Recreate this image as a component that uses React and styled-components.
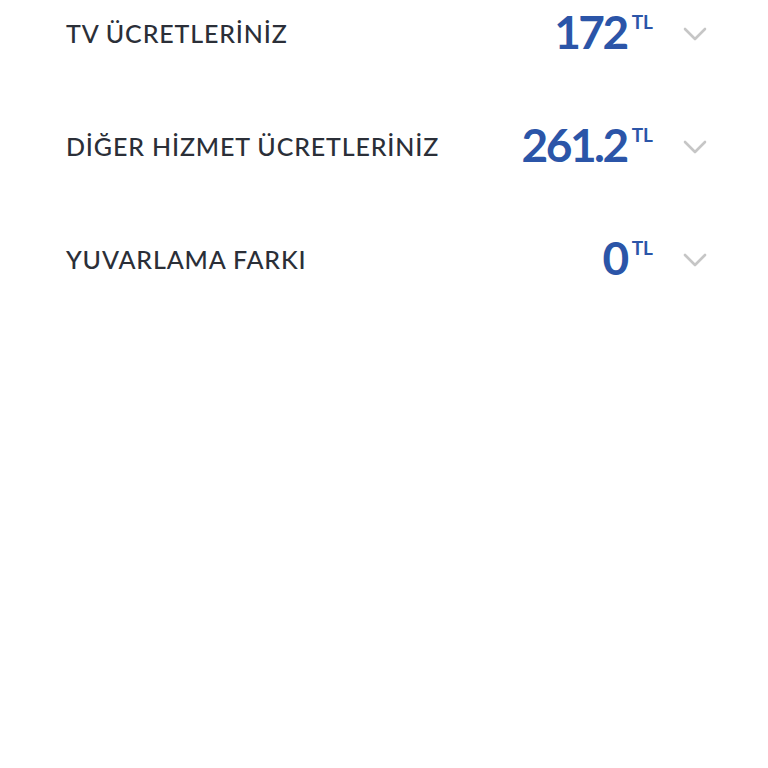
import React from 'react';
import styled, { createGlobalStyle } from 'styled-components';

const GlobalStyle = createGlobalStyle`
  html, body {
    margin: 0;
    padding: 0;
    background: #ffffff;
  }
  body {
    font-family: Lato, "Noto Sans", sans-serif;
  }
`;

const items = [
  { label: 'TV ÜCRETLERİNİZ', amount: '172' },
  { label: 'DİĞER HİZMET ÜCRETLERİNİZ', amount: '261.2' },
  { label: 'YUVARLAMA FARKI', amount: '0' },
];

const Chevron = () => (
  <svg width="24" height="14" viewBox="0 0 24 14" fill="none">
    <path d="M2 2l10 10L22 2" stroke="#c6c6c6" strokeWidth="2.6" strokeLinecap="round" strokeLinejoin="round" />
  </svg>
);

const App = () => (
  <>
    <GlobalStyle />
    <FeeList>
      {items.map(item => (
        <FeeRow key={item.label}>
          <FeeLabel>{item.label}</FeeLabel>
          <Amount>
            <AmountValue>{item.amount}</AmountValue>
            <Currency>TL</Currency>
          </Amount>
          <ToggleIcon>
            <Chevron />
          </ToggleIcon>
        </FeeRow>
      ))}
    </FeeList>
  </>
);

export default App;

const FeeList = styled.div`
  display: flex;
  flex-direction: column;
  gap: 45px;
  padding: 0 61px 0 66px;
`;

const FeeRow = styled.div`
  display: flex;
  align-items: center;
  height: 68px;
`;

const FeeLabel = styled.div`
  flex: 1;
  margin-top: -3px;
  font-size: 25px;
  font-weight: 500;
  letter-spacing: 0.85px;
  color: #2b2f38;
`;

const Amount = styled.div`
  display: flex;
  align-items: flex-start;
  margin-top: -4px;
`;

const AmountValue = styled.span`
  font-size: 46px;
  font-weight: 700;
  letter-spacing: -2.5px;
  line-height: 1;
  color: #2b55a8;
`;

const Currency = styled.span`
  margin: 3px 0 0 5px;
  font-size: 19px;
  font-weight: 700;
  line-height: 1;
  color: #2b55a8;
`;

const ToggleIcon = styled.div`
  display: flex;
  margin-left: 30px;
`;
